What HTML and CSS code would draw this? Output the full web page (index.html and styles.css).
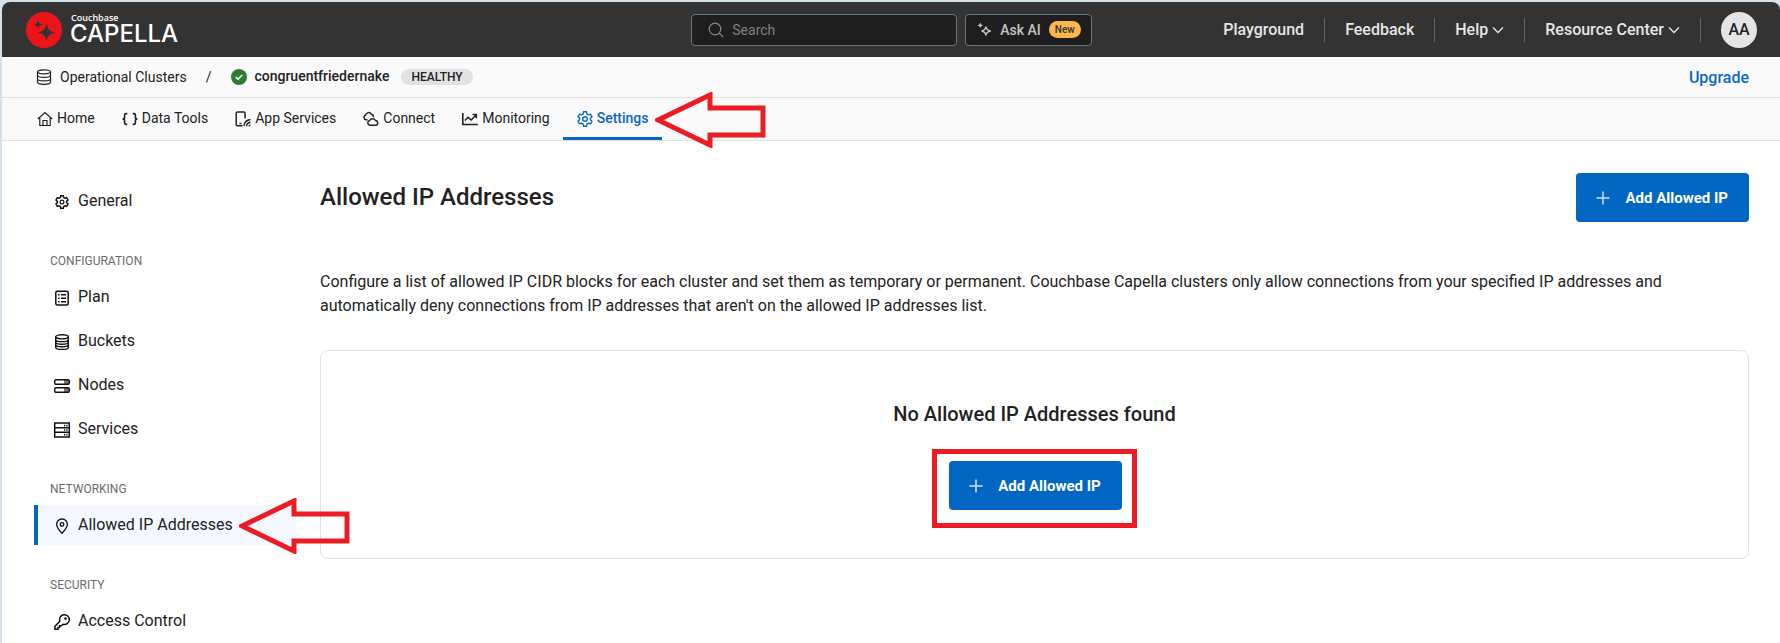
FILE: index.html
```html
<!DOCTYPE html>
<html lang="en">
<head>
<meta charset="utf-8">
<title>Allowed IP Addresses</title>
<link rel="stylesheet" href="styles.css">
</head>
<body>
<div class="app">
  <header class="topbar">
    <a class="brand" href="#">
      <svg class="brand-mark" viewBox="0 0 36 36" aria-hidden="true">
        <circle cx="18" cy="18" r="18" fill="#ed1419"/>
        <path fill="#333" d="M20.500 11.500Q21.700 19.500 29 20.500Q21.700 21.600 20.500 29Q19.300 21.600 12 20.500Q19.300 19.500 20.500 11.500Z"/>
        <path fill="#333" d="M12 8Q12.700 12 17 12.500Q12.700 13.200 12 17Q11.300 13.200 8 12.500Q11.300 12 12 8Z"/>
      </svg>
      <span class="brand-text">
        <span class="brand-top">Couchbase</span>
        <span class="brand-name">CAPELLA</span>
      </span>
    </a>
    <div class="topbar-center">
      <label class="search">
        <svg class="icon" viewBox="0 0 16 16" aria-hidden="true"><circle cx="7" cy="7" r="5.800"/><path d="M11.200 11.200L15.200 15.200"/></svg>
        <input type="search" placeholder="Search" aria-label="Search">
      </label>
      <button class="ask" type="button">
        <svg class="icon" viewBox="0 0 16 16" aria-hidden="true"><path d="M9.500 4.800Q10 8.800 14.600 9.500Q10 10.200 9.500 14.200Q9 10.200 4.800 9.500Q9 8.800 9.500 4.800Z"/><path fill="currentColor" stroke="none" d="M3.500 .5Q4 3 6.500 3.500Q4 4 3.500 6.500Q3 4 .5 3.500Q3 3 3.500 .5Z"/></svg>
        <span>Ask AI</span>
        <span class="new">New</span>
      </button>
    </div>
    <nav class="topnav" aria-label="Global">
      <a href="#">Playground</a>
      <a href="#">Feedback</a>
      <button type="button">Help <svg class="chevron" viewBox="0 0 12 12" aria-hidden="true"><path d="M1 3.500L6 8.500L11 3.500"/></svg></button>
      <button type="button">Resource Center <svg class="chevron" viewBox="0 0 12 12" aria-hidden="true"><path d="M1 3.500L6 8.500L11 3.500"/></svg></button>
      <button class="avatar-cell" type="button"><span class="avatar">AA</span></button>
    </nav>
  </header>

  <div class="crumbs">
    <a class="crumb" href="#">
      <svg class="icon" viewBox="0 0 16 16" aria-hidden="true"><ellipse cx="8" cy="2.800" rx="6.500" ry="2"/><path d="M1.500 2.800V13C1.500 14.300 4.400 15.300 8 15.300S14.500 14.300 14.500 13V2.800M1.500 6.200C1.500 7.500 4.400 8.300 8 8.300S14.500 7.500 14.500 6.200M1.500 9.700C1.500 11 4.400 11.800 8 11.800S14.500 11 14.500 9.700"/></svg>
      <span>Operational Clusters</span>
    </a>
    <span class="slash">/</span>
    <span class="cluster">
      <svg class="status" viewBox="0 0 16 16" aria-hidden="true"><circle cx="8" cy="8" r="8" fill="#2e7d32"/><path d="M4.800 8.200L7 10.200L11.200 6" fill="none" stroke="#fff" stroke-width="1.600"/></svg>
      <span>congruentfriedernake</span>
    </span>
    <span class="health">HEALTHY</span>
    <a class="upgrade" href="#">Upgrade</a>
  </div>

  <nav class="tabs" aria-label="Cluster">
    <a class="tab" href="#"><svg class="icon" viewBox="0 0 16 16" aria-hidden="true"><path d="M.8 8L8 1.500L15.200 8M2.800 7V14.500H13.200V7M6 14.500V9.500H10V14.500"/></svg><span>Home</span></a>
    <a class="tab" href="#"><svg class="icon" viewBox="0 0 16 16" aria-hidden="true"><path stroke-width="1.600" d="M5.300 2.600H3.900Q2.600 2.600 2.600 3.900V6.600Q2.600 8 .6 8Q2.600 8 2.600 9.400V12.100Q2.600 13.400 3.900 13.400H5.300M10.700 2.600H12.100Q13.400 2.600 13.400 3.900V6.600Q13.400 8 15.400 8Q13.400 8 13.400 9.400V12.100Q13.400 13.400 12.100 13.400H10.700"/></svg><span>Data Tools</span></a>
    <a class="tab" href="#"><svg class="icon" viewBox="0 0 16 16" aria-hidden="true"><path stroke-width="1.500" d="M7.500 14.800H2.500Q1.200 14.800 1.200 13.500V2.300Q1.200 1 2.500 1H8.800Q10.100 1 10.100 2.300V7.500M4.500 12.500H6.500"/><path stroke-width="1.400" d="M9 15Q9.200 9.500 15.500 8.500M11.500 15.200Q11.700 12 15.500 11.300M14 15.300Q14.200 14.100 15.500 13.900"/></svg><span>App Services</span></a>
    <a class="tab" href="#"><svg class="icon" viewBox="0 0 16 16" aria-hidden="true"><path stroke-width="1.500" d="M4.500 8.800H3.200A2.400 2.400 0 0 1 2.700 4.100A3 3 0 0 1 8.300 3.200A2.300 2.300 0 0 1 10.300 6.200M6.800 14.200A2.400 2.400 0 0 1 6.600 9.500A3.300 3.300 0 0 1 12.500 9.500A2.400 2.400 0 0 1 13 14.200Z"/></svg><span>Connect</span></a>
    <a class="tab" href="#"><svg class="icon" viewBox="0 0 16 16" aria-hidden="true"><path stroke-width="1.600" d="M.8 2V13.500H15.800M3 9.500L6 6.300L9.200 9L14 4M10.500 3.500H14.300V7.200"/></svg><span>Monitoring</span></a>
    <a class="tab active" href="#" aria-current="page"><svg class="icon" viewBox="0 0 16 16" aria-hidden="true"><path stroke-width="1.400" d="M6 3L6.600 .8H9.400L10 3L11.300 3.700L13.500 3.200L15 5.600L13.400 7.200V8.800L15 10.400L13.500 12.800L11.300 12.300L10 13L9.400 15.200H6.600L6 13L4.700 12.300L2.500 12.800L1 10.400L2.600 8.800V7.200L1 5.600L2.500 3.200L4.700 3.700Z"/><circle cx="8" cy="8" r="2.300" stroke-width="1.400"/></svg><span>Settings</span>
      <svg class="arrow" viewBox="0 0 112 56" aria-hidden="true"><path d="M3 28L55 3V16H108V43H55V53Z"/></svg>
    </a>
  </nav>

  <div class="body">
    <aside class="side" aria-label="Settings">
      <a class="item" href="#"><svg class="icon" viewBox="0 0 16 16" aria-hidden="true"><path stroke-width="1.500" d="M6.300 3.600L6.700 1.800H9.300L9.700 3.600L11 4.300L12.700 3.700L14 6L12.700 7.300V8.700L14 10L12.700 12.300L11 11.700L9.700 12.400L9.300 14.200H6.700L6.300 12.400L5 11.700L3.300 12.300L2 10L3.300 8.700V7.300L2 6L3.300 3.700L5 4.300Z"/><circle cx="8" cy="8" r="1.900"/></svg><span>General</span></a>
      <h2 class="group">CONFIGURATION</h2>
      <div class="items">
        <a class="item" href="#"><svg class="icon" viewBox="0 0 16 16" aria-hidden="true"><rect x="1.800" y="1.200" width="12.400" height="13.800" rx="1.500" stroke-width="1.500"/><path d="M7 4.700H12M7 8.200H12M7 11.700H12M4 4.700H5.500M4 8.200H5.500M4 11.700H5.500" stroke-width="1.500"/></svg><span>Plan</span></a>
        <a class="item" href="#"><svg class="icon" viewBox="0 0 16 16" aria-hidden="true"><g stroke-width="1.400"><ellipse cx="8" cy="2.800" rx="6.300" ry="2.100"/><path d="M1.700 2.800V13.200C1.700 14.500 4.400 15.400 8 15.400S14.300 14.500 14.300 13.200V2.800M1.700 5.400C1.700 6.800 4.400 7.600 8 7.600S14.300 6.800 14.300 5.400M1.700 8C1.700 9.400 4.400 10.200 8 10.200S14.300 9.400 14.300 8M1.700 10.600C1.700 12 4.400 12.800 8 12.800S14.300 12 14.300 10.600"/></g></svg><span>Buckets</span></a>
        <a class="item" href="#"><svg class="icon" viewBox="0 0 16 16" aria-hidden="true"><path fill="#777" stroke="none" d="M10 2H15V6H10ZM10 10H15V14H10Z"/><g stroke-width="1.400"><rect x=".7" y="1.700" width="14.600" height="4.600" rx="1.300"/><rect x=".7" y="9.700" width="14.600" height="4.600" rx="1.300"/></g></svg><span>Nodes</span></a>
        <a class="item" href="#"><svg class="icon" viewBox="0 0 16 16" aria-hidden="true"><path stroke-width="1.500" d="M.7 1H15.300V15H.7ZM.7 5.700H15.300M.7 10.300H15.300"/><path stroke-width="1.500" d="M10 3.400H11.300M12.300 3.400H13.600M10 8H11.300M12.300 8H13.600M10 12.700H11.300M12.300 12.700H13.600"/></svg><span>Services</span></a>
      </div>
      <h2 class="group">NETWORKING</h2>
      <a class="item current" href="#" aria-current="page"><svg class="icon" viewBox="0 0 16 16" aria-hidden="true"><path stroke-width="1.300" d="M8 15.200Q2.600 9.500 2.600 6.400A5.400 5.400 0 0 1 13.400 6.400Q13.400 9.500 8 15.200Z"/><circle cx="8" cy="6.400" r="1.800" stroke-width="1.300"/></svg><span>Allowed IP Addresses</span>
        <svg class="arrow" viewBox="0 0 112 56" aria-hidden="true"><path d="M3 28L55 3V16H108V43H55V53Z"/></svg>
      </a>
      <h2 class="group">SECURITY</h2>
      <a class="item" href="#"><svg class="icon" viewBox="0 0 16 16" aria-hidden="true"><path stroke-width="1.500" d="M5.800 7.300A4.900 4.900 0 1 1 9 10.300L7.400 11.800H5.600V13.400H4V15.200H.9V12.400Z"/><circle cx="11.500" cy="4.600" r=".7" fill="currentColor"/></svg><span>Access Control</span></a>
    </aside>

    <main class="main">
      <div class="head">
        <h1>Allowed IP Addresses</h1>
        <button class="primary" type="button"><svg class="plus" viewBox="0 0 14 14" aria-hidden="true"><path d="M7 .5V13.500M.5 7H13.500"/></svg><span>Add Allowed IP</span></button>
      </div>
      <p class="intro">Configure a list of allowed IP CIDR blocks for each cluster and set them as temporary or permanent. Couchbase Capella clusters only allow connections from your specified IP addresses and automatically deny connections from IP addresses that aren't on the allowed IP addresses list.</p>
      <section class="card">
        <h3>No Allowed IP Addresses found</h3>
        <div class="marked">
          <button class="primary" type="button"><svg class="plus" viewBox="0 0 14 14" aria-hidden="true"><path d="M7 .5V13.500M.5 7H13.500"/></svg><span>Add Allowed IP</span></button>
        </div>
      </section>
    </main>
  </div>
</div>
</body>
</html>
```
FILE: styles.css
```css
* { box-sizing: border-box; }
html { background: #d5e1eb; }
body {
  margin: 0;
  padding: 2px 0 0 2px;
  height: 100vh;
  overflow: hidden;
  font-family: Roboto, "Liberation Sans", sans-serif;
  font-size: 16px;
  color: #222;
}
a { color: inherit; text-decoration: none; }
button { font: inherit; color: inherit; background: none; border: 0; padding: 0; cursor: pointer; }
h1, h2, h3, p { margin: 0; }

.app {
  display: flex;
  flex-direction: column;
  height: 100%;
  overflow: hidden;
  background: #fff;
  border-radius: 8px 8px 0 0;
}
.icon { width: 16px; height: 16px; flex: none; fill: none; stroke: currentColor; stroke-width: 1.2; overflow: visible; }

.topbar {
  flex: none;
  display: grid;
  grid-template-columns: 1fr auto 1fr;
  align-items: center;
  height: 55px;
  padding: 0 23px 0 24px;
  background: #333;
}
.brand { display: flex; align-items: center; gap: 8px; color: #fff; }
.brand-mark { width: 36px; height: 36px; }
.brand-text { display: flex; flex-direction: column; padding-bottom: 1px; }
.brand-top { padding-left: 1px; font: 600 9px/10px "Open Sans", sans-serif; }
.brand-name { font: 500 24px/22px Inter, sans-serif; }

.topbar-center { display: flex; gap: 8px; }
.search, .ask {
  display: flex;
  align-items: center;
  height: 32px;
  border: 1px solid #6e7579;
  border-radius: 4px;
  background: #1e1e1e;
}
.search { width: 266px; padding: 0 16px; gap: 8px; color: #8a8a8a; }
.search input {
  flex: 1;
  min-width: 0;
  padding: 0;
  border: 0;
  outline: 0;
  background: none;
  font: 14px/20px Roboto, sans-serif;
  color: #ddd;
}
.search input::placeholder { color: #808080; opacity: 1; }
.ask { padding: 0 10px 0 11px; gap: 8px; font-size: 14px; font-weight: 500; color: #c4c4c4; }
.ask .icon { width: 15px; height: 15px; stroke-width: 1.6; }
.new { padding: 0 6px; border-radius: 9px; background: #ffb74d; color: #333; font-size: 10px; line-height: 17px; }

.topnav { display: flex; justify-content: flex-end; align-items: center; font-size: 16px; font-weight: 500; color: #e6e6e6; }
.topnav > * { display: flex; align-items: center; gap: 4px; height: 24px; padding: 0 20px; border-right: 1px solid #666; }
.topnav > .avatar-cell { padding-right: 0; border-right: 0; }
.chevron { width: 12px; height: 12px; fill: none; stroke: currentColor; stroke-width: 1.4; }
.avatar {
  display: grid;
  place-items: center;
  width: 36px;
  height: 36px;
  border-radius: 50%;
  background: #e4e4e4;
  color: #222;
}

.crumbs {
  flex: none;
  display: flex;
  align-items: center;
  height: 41px;
  padding: 0 31px 0 34px;
  background: #fafafa;
  border-bottom: 1px solid #e2e2e2;
  font-size: 14px;
}
.crumb { display: flex; align-items: center; gap: 8px; }
.slash { padding: 0 20px 0 19px; }
.cluster { display: flex; align-items: center; gap: 7px; font-weight: 500; }
.cluster span { padding-bottom: 2px; }
.status { width: 16px; height: 16px; }
.health { margin-left: 12px; padding: 0 10px; border-radius: 8px; background: #e2e2e2; font-size: 12px; font-weight: 500; line-height: 16px; }
.upgrade { margin-left: auto; color: #0b68c4; font-size: 16px; font-weight: 500; }

.tabs {
  flex: none;
  display: flex;
  height: 43px;
  padding-left: 21px;
  background: #fafafa;
  border-bottom: 1px solid #e2e2e2;
  font-size: 14px;
}
.tab { position: relative; display: flex; align-items: center; gap: 4px; padding: 3px 13px 0 14px; border-bottom: 3px solid transparent; }
.tab span { padding-bottom: 3px; }
.tab.active { color: #0b68c4; border-color: #0266c3; font-weight: 500; }

/* Callout arrows drawn over the interface */
.arrow { position: absolute; z-index: 2; width: 112px; height: 56px; fill: none; stroke: #ed1c24; stroke-width: 5; }
.tab .arrow { left: 92px; top: -6px; }
.item .arrow { left: 201px; top: -7px; }

.body { flex: 1; display: flex; gap: 24px; min-height: 0; padding: 32px 31px 0 32px; }
.side { flex: none; width: 262px; padding-top: 8px; }
.items { display: grid; gap: 4px; }
.item { position: relative; display: flex; align-items: center; gap: 8px; height: 40px; padding-left: 16px; border-left: 4px solid transparent; }
.item .icon { color: #111; margin-top: 2px; }
.item span { padding-bottom: 2px; }
.item.current { background: #f5f9ff; border-color: #0266c3; }
.group { height: 56px; padding: 24px 0 0 16px; font-size: 12px; font-weight: 400; line-height: 32px; color: #6b6b6b; }

.main { flex: 1; min-width: 0; }
.head { display: flex; justify-content: space-between; align-items: center; }
h1 { padding-bottom: 2px; font-size: 24px; font-weight: 500; line-height: 32px; }
.primary {
  display: flex;
  align-items: center;
  gap: 15px;
  height: 49px;
  padding: 0 21px 0 20px;
  border-radius: 4px;
  background: #0266c3;
  color: #fff;
  font-size: 15px;
  font-weight: 700;
}
.plus { width: 14px; height: 14px; fill: none; stroke: #cfe2f5; stroke-width: 1.5; }
.intro { margin: 48px 0 32px; line-height: 24px; }
.card { display: flex; flex-direction: column; align-items: center; padding: 47px 24px 30px; border: 1px solid #e2e2e2; border-radius: 8px; }
h3 { font-size: 20px; font-weight: 500; line-height: 32px; }
.marked { margin-top: 19px; padding: 7px 10px 13px 12px; border: 5px solid #ed1c24; }
```
